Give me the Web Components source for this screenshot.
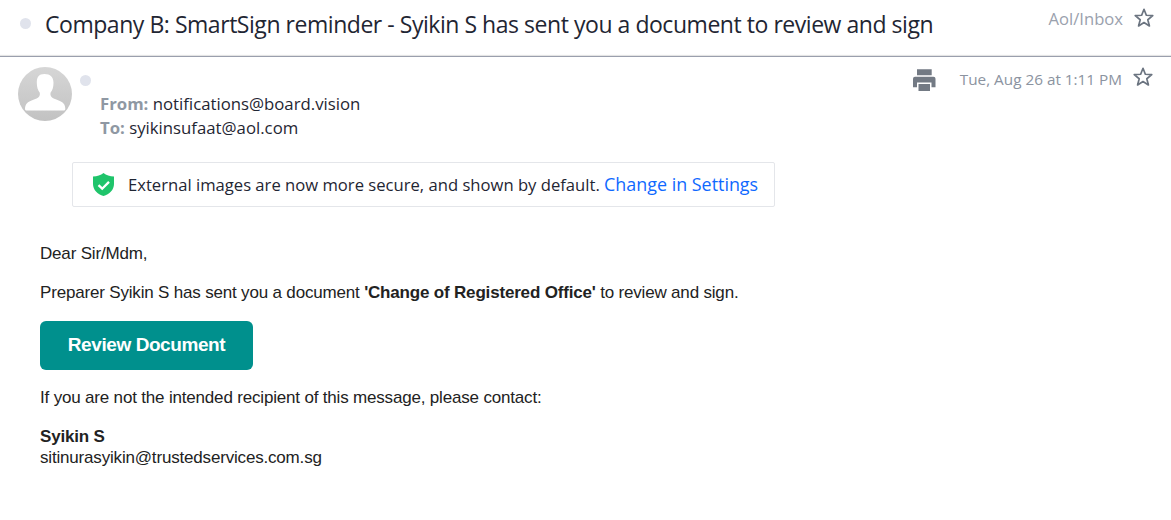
<!DOCTYPE html>
<html>
<head>
<meta charset="utf-8">
<style>
  html, body { margin: 0; padding: 0; background: #fff; }
  body { width: 1171px; height: 520px; overflow: hidden; }
</style>
</head>
<body>
<mail-view>
  <mail-header subject="Company B: SmartSign reminder - Syikin S has sent you a document to review and sign" folder="Aol/Inbox"></mail-header>
  <mail-meta from="notifications@board.vision" to="syikinsufaat@aol.com" date="Tue, Aug 26 at 1:11 PM"></mail-meta>
  <image-notice></image-notice>
  <mail-body>
    <p>Dear Sir/Mdm,</p>
    <p>Preparer Syikin S has sent you a document <b>'Change of Registered Office'</b> to review and sign.</p>
    <review-button>Review Document</review-button>
    <p>If you are not the intended recipient of this message, please contact:</p>
    <p class="sig"><b>Syikin S</b><br>sitinurasyikin@trustedservices.com.sg</p>
  </mail-body>
</mail-view>

<script>
const STAR = `<svg width="20" height="20" viewBox="0 0 20 20"><path d="M10 1.300L12.350 7.260 18.750 7.660 13.800 11.740 15.410 17.940 10 14.500 4.590 17.940 6.200 11.740 1.250 7.660 7.650 7.260z" fill="none" stroke="#6b7480" stroke-width="1.700" stroke-linejoin="round"/></svg>`;

class MailView extends HTMLElement {
  connectedCallback() {
    this.attachShadow({ mode: 'open' }).innerHTML = `
      <style>
        :host { display: block; font-family: "Open Sans", sans-serif; color: #1f2633; }
      </style>
      <slot></slot>`;
  }
}

class MailHeader extends HTMLElement {
  connectedCallback() {
    this.attachShadow({ mode: 'open' }).innerHTML = `
      <style>
        :host {
          display: flex; height: 57px; box-sizing: border-box;
          border-bottom: 1px solid #9a9fad; box-shadow: inset 0 -2px 1px -1px #e2e2e2;
          padding: 8px 17px 0 20px;
        }
        .dot { width: 11px; height: 11px; border-radius: 50%; background: #e0e3ec; margin: 10px 14px 0 0; flex: none; }
        .subject { flex: 1; font-size: 23px; letter-spacing: -0.46px; line-height: 32px; white-space: nowrap; }
        .folder { font-size: 16.6px; color: #9aa1ad; line-height: 22px; margin: 0 11px 0 0; }
        svg { display: block; }
      </style>
      <span class="dot"></span>
      <span class="subject">${this.getAttribute('subject')}</span>
      <span class="folder">${this.getAttribute('folder')}</span>
      ${STAR}`;
  }
}

class MailMeta extends HTMLElement {
  connectedCallback() {
    this.attachShadow({ mode: 'open' }).innerHTML = `
      <style>
        :host { display: flex; height: 105px; box-sizing: border-box; padding: 10px 18px 0 18px; }
        .avatar { width: 54px; height: 54px; flex: none; }
        .dot { width: 11px; height: 11px; border-radius: 50%; background: #e0e3ec; margin: 8px 0 0 8px; flex: none; }
        .who { flex: 1; margin: 25px 0 0 9px; font-size: 16.75px; line-height: 24px; }
        .who b { color: #8f98a3; font-weight: 700; }
        .right { display: flex; align-items: flex-start; }
        .date { font-size: 15.3px; color: #8b93a0; line-height: 24px; margin: 0 11px 0 24px; }
        svg { display: block; }
      </style>
      <svg class="avatar" viewBox="0 0 54 54">
        <defs>
          <linearGradient id="g" x1="0" y1="0" x2="0" y2="1">
            <stop offset="0" stop-color="#d6d6d6"/><stop offset="1" stop-color="#c2c2c2"/>
          </linearGradient>
        </defs>
        <circle cx="27" cy="27" r="27" fill="url(#g)"/>
        <path d="M26.500 7c5.800 0 9 3.200 9 8.800 0 4.200-1 7.700-3 9.900-.4 3 .6 4.600 3.200 5.800 4.500 1.900 8.500 3 10.300 5.500 1 1.500 1.300 3.300 1.300 4.900-.1 1-.8 1.600-2 1.600H9c-1.200 0-1.900-.6-2-1.600 0-1.600.3-3.400 1.300-4.900 1.800-2.500 5.800-3.600 10.300-5.500 2.600-1.200 3.600-2.800 3.200-5.800-2-2.200-3-5.700-3-9.900C18.800 10.200 20.700 7 26.500 7z" fill="#fff"/>
      </svg>
      <span class="dot"></span>
      <div class="who">
        <div><b>From:</b> ${this.getAttribute('from')}</div>
        <div><b>To:</b> ${this.getAttribute('to')}</div>
      </div>
      <div class="right">
        <svg width="24" height="24" viewBox="0 0 24 24"><path d="M5 2.300h14.700v6H5zM3 9.700h18.500a2 2 0 0 1 2 2v8.600h-4v-4.800H5v4.800H1v-8.600a2 2 0 0 1 2-2zM6.500 17h11.500v7.300H6.500z" fill="#737a84"/></svg>
        <span class="date">${this.getAttribute('date')}</span>
        ${STAR}
      </div>`;
  }
}

class ImageNotice extends HTMLElement {
  connectedCallback() {
    this.attachShadow({ mode: 'open' }).innerHTML = `
      <style>
        :host {
          display: flex; align-items: center; width: 703px; height: 45px; box-sizing: border-box;
          margin-left: 72px; border: 1px solid #e4e6ea; border-radius: 2px; padding: 0 0 1px 20px; font-size: 16.64px;
        }
        svg { flex: none; margin-right: 14px; }
        a { color: #0f69ff; text-decoration: none; font-size: 17.9px; }
      </style>
      <svg width="21" height="23" viewBox="0 0 21 23">
        <path d="M10.500 0C13.300 2.200 16.800 3.300 21 3.400V11C21 16.800 16.500 21.300 10.500 23 4.500 21.300 0 16.800 0 11V3.400C4.200 3.300 7.700 2.200 10.500 0z" fill="#1fc46b"/>
        <path d="M5.500 12.200L9.200 15.700 16 8.900" fill="none" stroke="#fff" stroke-width="2.300"/>
      </svg>
      <span>External images are now more secure, and shown by default. <a>Change in Settings</a></span>`;
  }
}

class MailBody extends HTMLElement {
  connectedCallback() {
    this.attachShadow({ mode: 'open' }).innerHTML = `
      <style>
        :host {
          display: block; padding: 36px 0 0 40px;
          font: 17px/21px "Liberation Sans", Arial, sans-serif; letter-spacing: -0.18px; color: #222;
        }
        ::slotted(p) { margin: 0 0 18px; }
      </style>
      <slot></slot>`;
  }
}

class ReviewButton extends HTMLElement {
  connectedCallback() {
    this.attachShadow({ mode: 'open' }).innerHTML = `
      <style>
        :host {
          display: flex; align-items: center; justify-content: center;
          width: 213px; height: 49px; box-sizing: border-box; padding-bottom: 2px; margin-bottom: 17px; border-radius: 6px;
          background: #00908d; color: #fff; font-weight: 700; font-size: 19px; letter-spacing: -0.42px;
        }
      </style>
      <slot></slot>`;
  }
}

customElements.define('mail-view', MailView);
customElements.define('mail-header', MailHeader);
customElements.define('mail-meta', MailMeta);
customElements.define('image-notice', ImageNotice);
customElements.define('mail-body', MailBody);
customElements.define('review-button', ReviewButton);
</script>
</body>
</html>
